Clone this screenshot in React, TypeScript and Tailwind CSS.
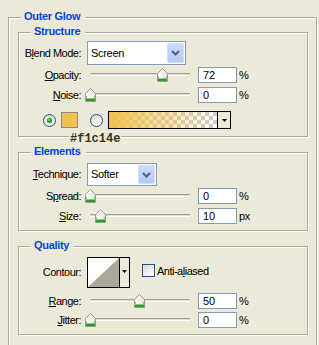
import React from "react";

function Thumb() {
  return (
    <svg width="11" height="14" viewBox="0 0 11 14">
      <defs>
        <linearGradient id="tg" x1="0" y1="0" x2="1" y2="0">
          <stop offset="0" stopColor="#ffffff" />
          <stop offset="1" stopColor="#e4e3dc" />
        </linearGradient>
      </defs>
      <path d="M5.5 0.5 L10.5 5.5 L10.5 13.5 L0.5 13.5 L0.5 5.5 Z" fill="url(#tg)" stroke="#9a9a8e" />
      <rect x="1" y="10.5" width="9" height="2.5" fill="#21a121" />
      <rect x="1" y="8" width="1" height="3" fill="#7fd07f" />
      <rect x="9" y="8" width="1" height="3" fill="#7fd07f" />
    </svg>
  );
}

function Slider({ thumbX }: { thumbX: number }) {
  return (
    <div className="relative w-[116px] h-[16px] shrink-0">
      <div className="absolute left-[8px] top-[6px] w-[100px] h-[3px] rounded-l-full border-t border-[#a09f94] border-b border-b-white bg-[#dedcd0]" />
      <div className="absolute top-[1px]" style={{ left: thumbX - 5 - 82 }}>
        <Thumb />
      </div>
    </div>
  );
}

function NumBox({ value }: { value: string }) {
  return (
    <div className="w-[39px] h-[16px] shrink-0 border border-[#7f9db9] bg-white flex items-center pl-[4px] text-[11px] leading-[13px]">
      {value}
    </div>
  );
}

function Label({ children }: { children: React.ReactNode }) {
  return (
    <div className="w-[63px] shrink-0 text-right pr-[1px] text-[11px] leading-[13px] tracking-[-0.5px] text-black whitespace-nowrap">
      {children}
    </div>
  );
}

function SliderRow({
  label,
  thumbX,
  value,
  unit,
  mt,
}: {
  label: React.ReactNode;
  thumbX: number;
  value: string;
  unit: string;
  mt: string;
}) {
  return (
    <div className={`flex items-center h-[16px] ${mt}`}>
      <Label>{label}</Label>
      <Slider thumbX={thumbX} />
      <NumBox value={value} />
      <span className="ml-[2px] text-[11px] leading-[13px] tracking-[-0.3px]">{unit}</span>
    </div>
  );
}

function Chevron() {
  return (
    <svg width="9" height="6" viewBox="0 0 9 6">
      <path d="M1 1 L4.5 4.5 L8 1" fill="none" stroke="#4d6185" strokeWidth="2" />
    </svg>
  );
}

function Select({ value, w, h }: { value: string; w: string; h: string }) {
  return (
    <div className={`${w} ${h} ml-[5px] shrink-0 relative border border-[#7f9db9] bg-white flex items-center`}>
      <span className="pl-[3px] text-[11px] leading-[13px] tracking-[-0.3px]">{value}</span>
      <div className="absolute right-[1px] top-[1px] bottom-[1px] w-[17px] rounded-[2px] border border-[#d2ddfb] bg-[linear-gradient(180deg,#ccdafc,#b4c7f6)] flex items-center justify-center">
        <Chevron />
      </div>
    </div>
  );
}

function Radio({ checked }: { checked: boolean }) {
  return (
    <svg width="13" height="13" viewBox="0 0 13 13" className="shrink-0">
      <defs>
        <linearGradient id={checked ? "rg1" : "rg2"} x1="0" y1="0" x2="1" y2="1">
          <stop offset="0" stopColor="#dcdcd4" />
          <stop offset="1" stopColor="#ffffff" />
        </linearGradient>
      </defs>
      <circle cx="6.5" cy="6.5" r="6" fill={`url(#${checked ? "rg1" : "rg2"})`} stroke="#1c5180" />
      {checked && <circle cx="6.5" cy="6.5" r="2.5" fill="#21a121" />}
      {checked && <circle cx="6" cy="6" r="1" fill="#6fd46f" />}
    </svg>
  );
}

function GradientPreview() {
  return (
    <div className="ml-[5px] w-[123px] h-[18px] shrink-0 border border-black flex">
      <svg width="108" height="16" viewBox="0 0 108 16" className="block">
        <defs>
          <pattern id="chk" width="8" height="8" patternUnits="userSpaceOnUse">
            <rect width="8" height="8" fill="#ffffff" />
            <rect width="4" height="4" fill="#cccccc" />
            <rect x="4" y="4" width="4" height="4" fill="#cccccc" />
          </pattern>
          <linearGradient id="gfade" x1="0" y1="0" x2="1" y2="0">
            <stop offset="0" stopColor="#f1c14e" stopOpacity="1" />
            <stop offset="1" stopColor="#f1c14e" stopOpacity="0" />
          </linearGradient>
        </defs>
        <rect width="108" height="16" fill="url(#chk)" />
        <rect width="108" height="16" fill="url(#gfade)" />
      </svg>
      <div className="w-[1px] bg-black" />
      <div className="flex-1 bg-[#ece9d8] flex items-center justify-center">
        <svg width="5" height="3" viewBox="0 0 5 3">
          <path d="M0 0 L5 0 L2.5 3 Z" fill="#000" />
        </svg>
      </div>
    </div>
  );
}

function Contour() {
  return (
    <div className="ml-[5px] w-[43px] h-[31px] shrink-0 border border-black flex">
      <svg width="31" height="29" viewBox="0 0 31 29" className="block">
        <rect width="31" height="29" fill="#ffffff" />
        <path d="M0 29 L31 0 L31 29 Z" fill="#aca798" />
      </svg>
      <div className="w-[1px] bg-black" />
      <div className="flex-1 bg-[#ece9d8] flex justify-center pt-[12px]">
        <svg width="5" height="3" viewBox="0 0 5 3">
          <path d="M0 0 L5 0 L2.5 3 Z" fill="#000" />
        </svg>
      </div>
    </div>
  );
}

function Group({
  title,
  h,
  mt,
  children,
}: {
  title: string;
  h: string;
  mt?: string;
  children: React.ReactNode;
}) {
  return (
    <div
      className={`relative w-[290px] ${h} ${mt ?? ""} border border-[#aca899] shadow-[inset_1px_1px_0_#ffffff,1px_1px_0_#ffffff]`}
    >
      <span className="absolute left-[12px] top-[-8px] bg-[#ece9d8] pl-[3px] pr-[5px] text-[11px] leading-[13px] font-bold tracking-[-0.3px] text-[#0046d5] whitespace-nowrap">
        {title}
      </span>
      {children}
    </div>
  );
}

export default function App() {
  return (
    <div className="relative w-[319px] h-[345px] overflow-hidden bg-[#ece9d8] pt-[17px] pl-[8px] font-['Liberation_Sans',Arial,sans-serif] text-black">
      <div className="relative w-[309px] h-[345px] border border-[#aca899] shadow-[inset_1px_1px_0_#ffffff,1px_1px_0_#ffffff] pt-[14px] pl-[9px]">
        <span className="absolute left-[12px] top-[-8px] bg-[#ece9d8] pl-[3px] pr-[6px] text-[11px] leading-[13px] font-bold tracking-[-0.3px] text-[#0046d5] whitespace-nowrap">
          Outer Glow
        </span>

        <Group title="Structure" h="h-[105px]">
          <div className="flex items-center h-[24px] mt-[8px]">
            <Label>
              B<u>l</u>end Mode:
            </Label>
            <Select value="Screen" w="w-[99px]" h="h-[24px]" />
          </div>
          <SliderRow label={<><u>O</u>pacity:</>} thumbX={162} value="72" unit="%" mt="mt-[2px]" />
          <SliderRow label={<><u>N</u>oise:</>} thumbX={90} value="0" unit="%" mt="mt-[4px]" />
          <div className="flex items-center h-[18px] mt-[8px]">
            <div className="ml-[24px]">
              <Radio checked />
            </div>
            <div className="ml-[5px] w-[17px] h-[16px] shrink-0 border border-[#8a8a80] bg-[#f1c14e]" />
            <div className="ml-[12px]">
              <Radio checked={false} />
            </div>
            <GradientPreview />
          </div>
        </Group>

        <Group title="Elements" h="h-[79px]" mt="mt-[15px]">
          <div className="flex items-center h-[23px] mt-[10px]">
            <Label>
              <u>T</u>echnique:
            </Label>
            <Select value="Softer" w="w-[70px]" h="h-[23px]" />
          </div>
          <SliderRow label={<>S<u>p</u>read:</>} thumbX={90} value="0" unit="%" mt="mt-[2px]" />
          <SliderRow label={<><u>S</u>ize:</>} thumbX={100} value="10" unit="px" mt="mt-[4px]" />
        </Group>

        <Group title="Quality" h="h-[89px]" mt="mt-[15px]">
          <div className="flex items-start h-[31px] mt-[10px]">
            <div className="self-center">
              <Label>Contour:</Label>
            </div>
            <Contour />
            <div className="ml-[12px] mt-[7px] w-[13px] h-[13px] shrink-0 border border-[#1c5180] bg-[linear-gradient(135deg,#dcdcd4,#ffffff)]" />
            <span className="ml-[2px] mt-[8px] text-[11px] leading-[13px] tracking-[-0.5px] whitespace-nowrap">
              Anti-a<u>l</u>iased
            </span>
          </div>
          <SliderRow label={<><u>R</u>ange:</>} thumbX={139} value="50" unit="%" mt="mt-[5px]" />
          <SliderRow label={<><u>J</u>itter:</>} thumbX={90} value="0" unit="%" mt="mt-[3px]" />
        </Group>
      </div>

      <span className="absolute left-[69px] top-[132px] bg-[#ece9d8] px-[1px] font-['Liberation_Mono',monospace] font-bold text-[12px] leading-[14px] text-[#3f3517]">
        #f1c14e
      </span>
    </div>
  );
}
